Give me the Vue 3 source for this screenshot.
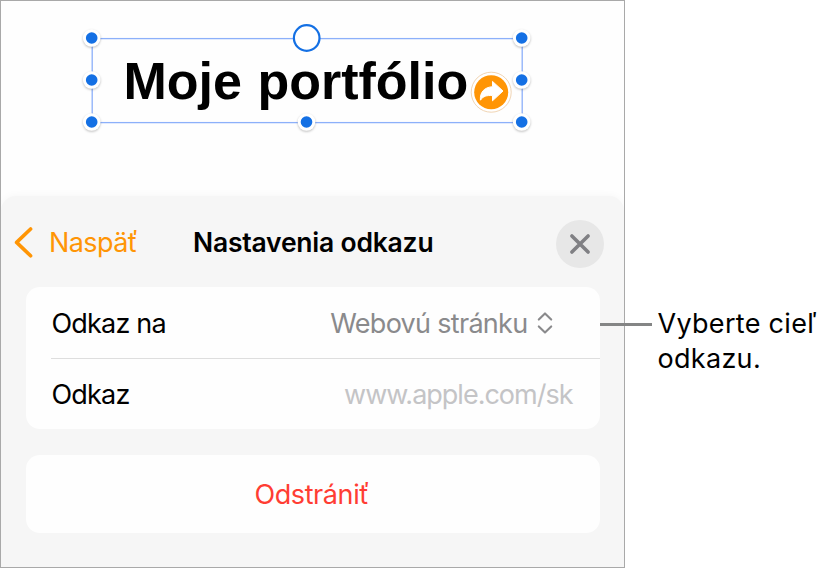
<template>
  <div class="page">
    <div class="device">
      <div class="canvas">
        <div class="text-box">
          <h1 class="doc-title">Moje portfólio</h1>
          <svg class="selection" width="450" height="115" viewBox="0 0 450 115">
            <rect class="outline" x="12.2" y="13.6" width="430" height="84" />
            <g v-for="(h, i) in handles" :key="i">
              <circle class="handle-ring" :cx="h.x" :cy="h.y" r="8.8" />
              <circle class="handle-dot" :cx="h.x" :cy="h.y" r="5.8" />
            </g>
            <circle class="rotate" cx="226.7" cy="13" r="12.8" />
          </svg>
          <svg class="link-badge" width="42" height="42" viewBox="0 0 42 42">
            <circle class="badge-edge" cx="21.2" cy="21.2" r="20" />
            <circle class="badge-fill" cx="21.2" cy="21.2" r="17" />
            <path class="badge-arrow" d="M22.5 10.4 L33 20 L22.5 29.8 V24.6 C16.5 24.2 13.2 25.2 10.4 29.2 C9.8 21.4 14.2 16.2 22.5 15.7 Z" />
          </svg>
        </div>
      </div>
      <section class="sheet">
        <header class="sheet-header">
          <button class="back">
            <svg width="20" height="32" viewBox="0 0 20 32"><path d="M16.6 2 L2.6 15.4 L16.6 28.8" /></svg>
            <span>Naspäť</span>
          </button>
          <h2 class="sheet-title">Nastavenia odkazu</h2>
          <button class="close">
            <svg width="24" height="24" viewBox="0 0 24 24"><path d="M3.9 3.9 L20.1 20.1 M20.1 3.9 L3.9 20.1" /></svg>
          </button>
        </header>
        <div class="card">
          <div class="row">
            <span class="label">Odkaz na</span>
            <span class="value">{{ target }}</span>
            <svg class="updown" width="16" height="24" viewBox="0 0 16 24">
              <path d="M1.8 8.6 L8 2.4 L14.2 8.6 M1.8 15.4 L8 21.4 L14.2 15.4" />
            </svg>
          </div>
          <div class="row second">
            <span class="label">Odkaz</span>
            <span class="placeholder">www.apple.com/sk</span>
          </div>
        </div>
        <button class="card remove"><span>Odstrániť</span></button>
      </section>
    </div>
    <aside class="callout">
      <span class="callout-line"></span>
      <p>Vyberte cieľ<br />odkazu.</p>
    </aside>
  </div>
</template>

<script setup>
import { ref } from "vue";

const target = ref("Webovú stránku");

// selection handles, relative to the overlay
const handles = [
  { x: 11.7, y: 13 },
  { x: 441.7, y: 13 },
  { x: 11.7, y: 55 },
  { x: 441.7, y: 55 },
  { x: 11.7, y: 97 },
  { x: 226.5, y: 97 },
  { x: 441.7, y: 97 }
];
</script>

<style>
body {
  margin: 0;
  background: #ffffff;
}
</style>

<style scoped>
.page {
  display: flex;
  align-items: flex-start;
  width: 825px;
  height: 569px;
  overflow: hidden;
  font-family: Inter, "Liberation Sans", sans-serif;
  font-size: 27px;
  color: #000000;
}

button {
  border: 0;
  padding: 0;
  background: none;
  font: inherit;
}

svg {
  display: block;
  flex: none;
  overflow: visible;
}

.device {
  box-sizing: border-box;
  display: flex;
  flex-direction: column;
  width: 625px;
  height: 568px;
  flex: none;
  border: 1px solid #a9a9a9;
  background: #fefefe;
}

.canvas {
  height: 195px;
  padding: 38px 0 0 91px;
  box-sizing: border-box;
}

.text-box {
  position: relative;
  width: 430px;
  height: 84px;
}

.doc-title {
  margin: 0;
  padding-left: 31.5px;
  font: bold 52px/84px "Liberation Sans", sans-serif;
  word-spacing: 1px;
  white-space: nowrap;
}

.selection {
  position: absolute;
  left: -12px;
  top: -14px;
}

.outline {
  fill: none;
  stroke: #8cb0fa;
  stroke-width: 1.3;
}

.handle-ring {
  fill: #ffffff;
  filter: drop-shadow(0 1px 1.2px rgba(0, 0, 0, 0.25));
}

.handle-dot {
  fill: #1470e4;
}

.rotate {
  fill: #ffffff;
  stroke: #1470e4;
  stroke-width: 2.2;
}

.link-badge {
  position: absolute;
  left: 378px;
  top: 32px;
}

.badge-edge {
  fill: #ffffff;
  stroke: #ecc9a0;
  stroke-width: 0.8;
}

.badge-fill {
  fill: #ff9505;
}

.badge-arrow {
  fill: #ffffff;
  stroke: #ffffff;
  stroke-width: 1;
  stroke-linejoin: round;
}

.sheet {
  flex: 1;
  padding: 0 24px 0 25px;
  border-radius: 15px 15px 0 0;
  background: #f6f6f6;
  box-shadow: 0 0 8px rgba(0, 0, 0, 0.04);
  clip-path: inset(-12px 0 0 0);
}

.sheet-header {
  display: flex;
  align-items: center;
  height: 91px;
  margin: 0 -4px 0 -12px;
}

.back {
  display: flex;
  align-items: center;
  gap: 15px;
  width: 179px;
  padding-top: 2px;
  color: #ff9505;
  letter-spacing: -0.6px;
}

.back path {
  fill: none;
  stroke: #ff9505;
  stroke-width: 3.6;
  stroke-linecap: round;
  stroke-linejoin: round;
}

.sheet-title {
  margin: 0;
  padding-top: 1px;
  flex: 1;
  font-size: 26.5px;
  font-weight: 600;
  letter-spacing: -0.22px;
  white-space: nowrap;
}

.close {
  display: flex;
  align-items: center;
  justify-content: center;
  width: 48px;
  height: 48px;
  margin-top: 4px;
  border-radius: 50%;
  background: #e7e7e7;
}

.close path {
  fill: none;
  stroke: #808084;
  stroke-width: 3.6;
  stroke-linecap: round;
}

.card {
  box-sizing: border-box;
  width: 573.5px;
  border-radius: 14px;
  background: #fefefe;
}

.row {
  display: flex;
  align-items: center;
  height: 71px;
  margin-left: 25px;
  padding: 1px 47px 0 0.5px;
  box-sizing: border-box;
  white-space: nowrap;
}

.row.second {
  padding-right: 27px;
  border-top: 1px solid #dedede;
}

.label {
  flex: 1;
  letter-spacing: -0.8px;
}

.value {
  color: #8a8a8c;
  letter-spacing: -0.7px;
}

.updown {
  margin-left: 9px;
}

.updown path {
  fill: none;
  stroke: #8a8a8c;
  stroke-width: 2.1;
  stroke-linecap: round;
  stroke-linejoin: round;
}

.placeholder {
  color: #c4c4c6;
  letter-spacing: -1px;
}

.remove {
  display: flex;
  align-items: center;
  justify-content: center;
  height: 78px;
  margin-top: 26px;
  padding-right: 2px;
  color: #ff3d33;
  letter-spacing: -0.4px;
}

.callout {
  position: relative;
  display: flex;
  align-items: flex-start;
  margin: 306px 0 0 -25px;
}

.callout-line {
  width: 52px;
  height: 3px;
  margin-top: 17px;
  background: #848585;
}

.callout p {
  margin: 0 0 0 5.5px;
  line-height: 35px;
  letter-spacing: 0.3px;
  white-space: nowrap;
}
</style>
